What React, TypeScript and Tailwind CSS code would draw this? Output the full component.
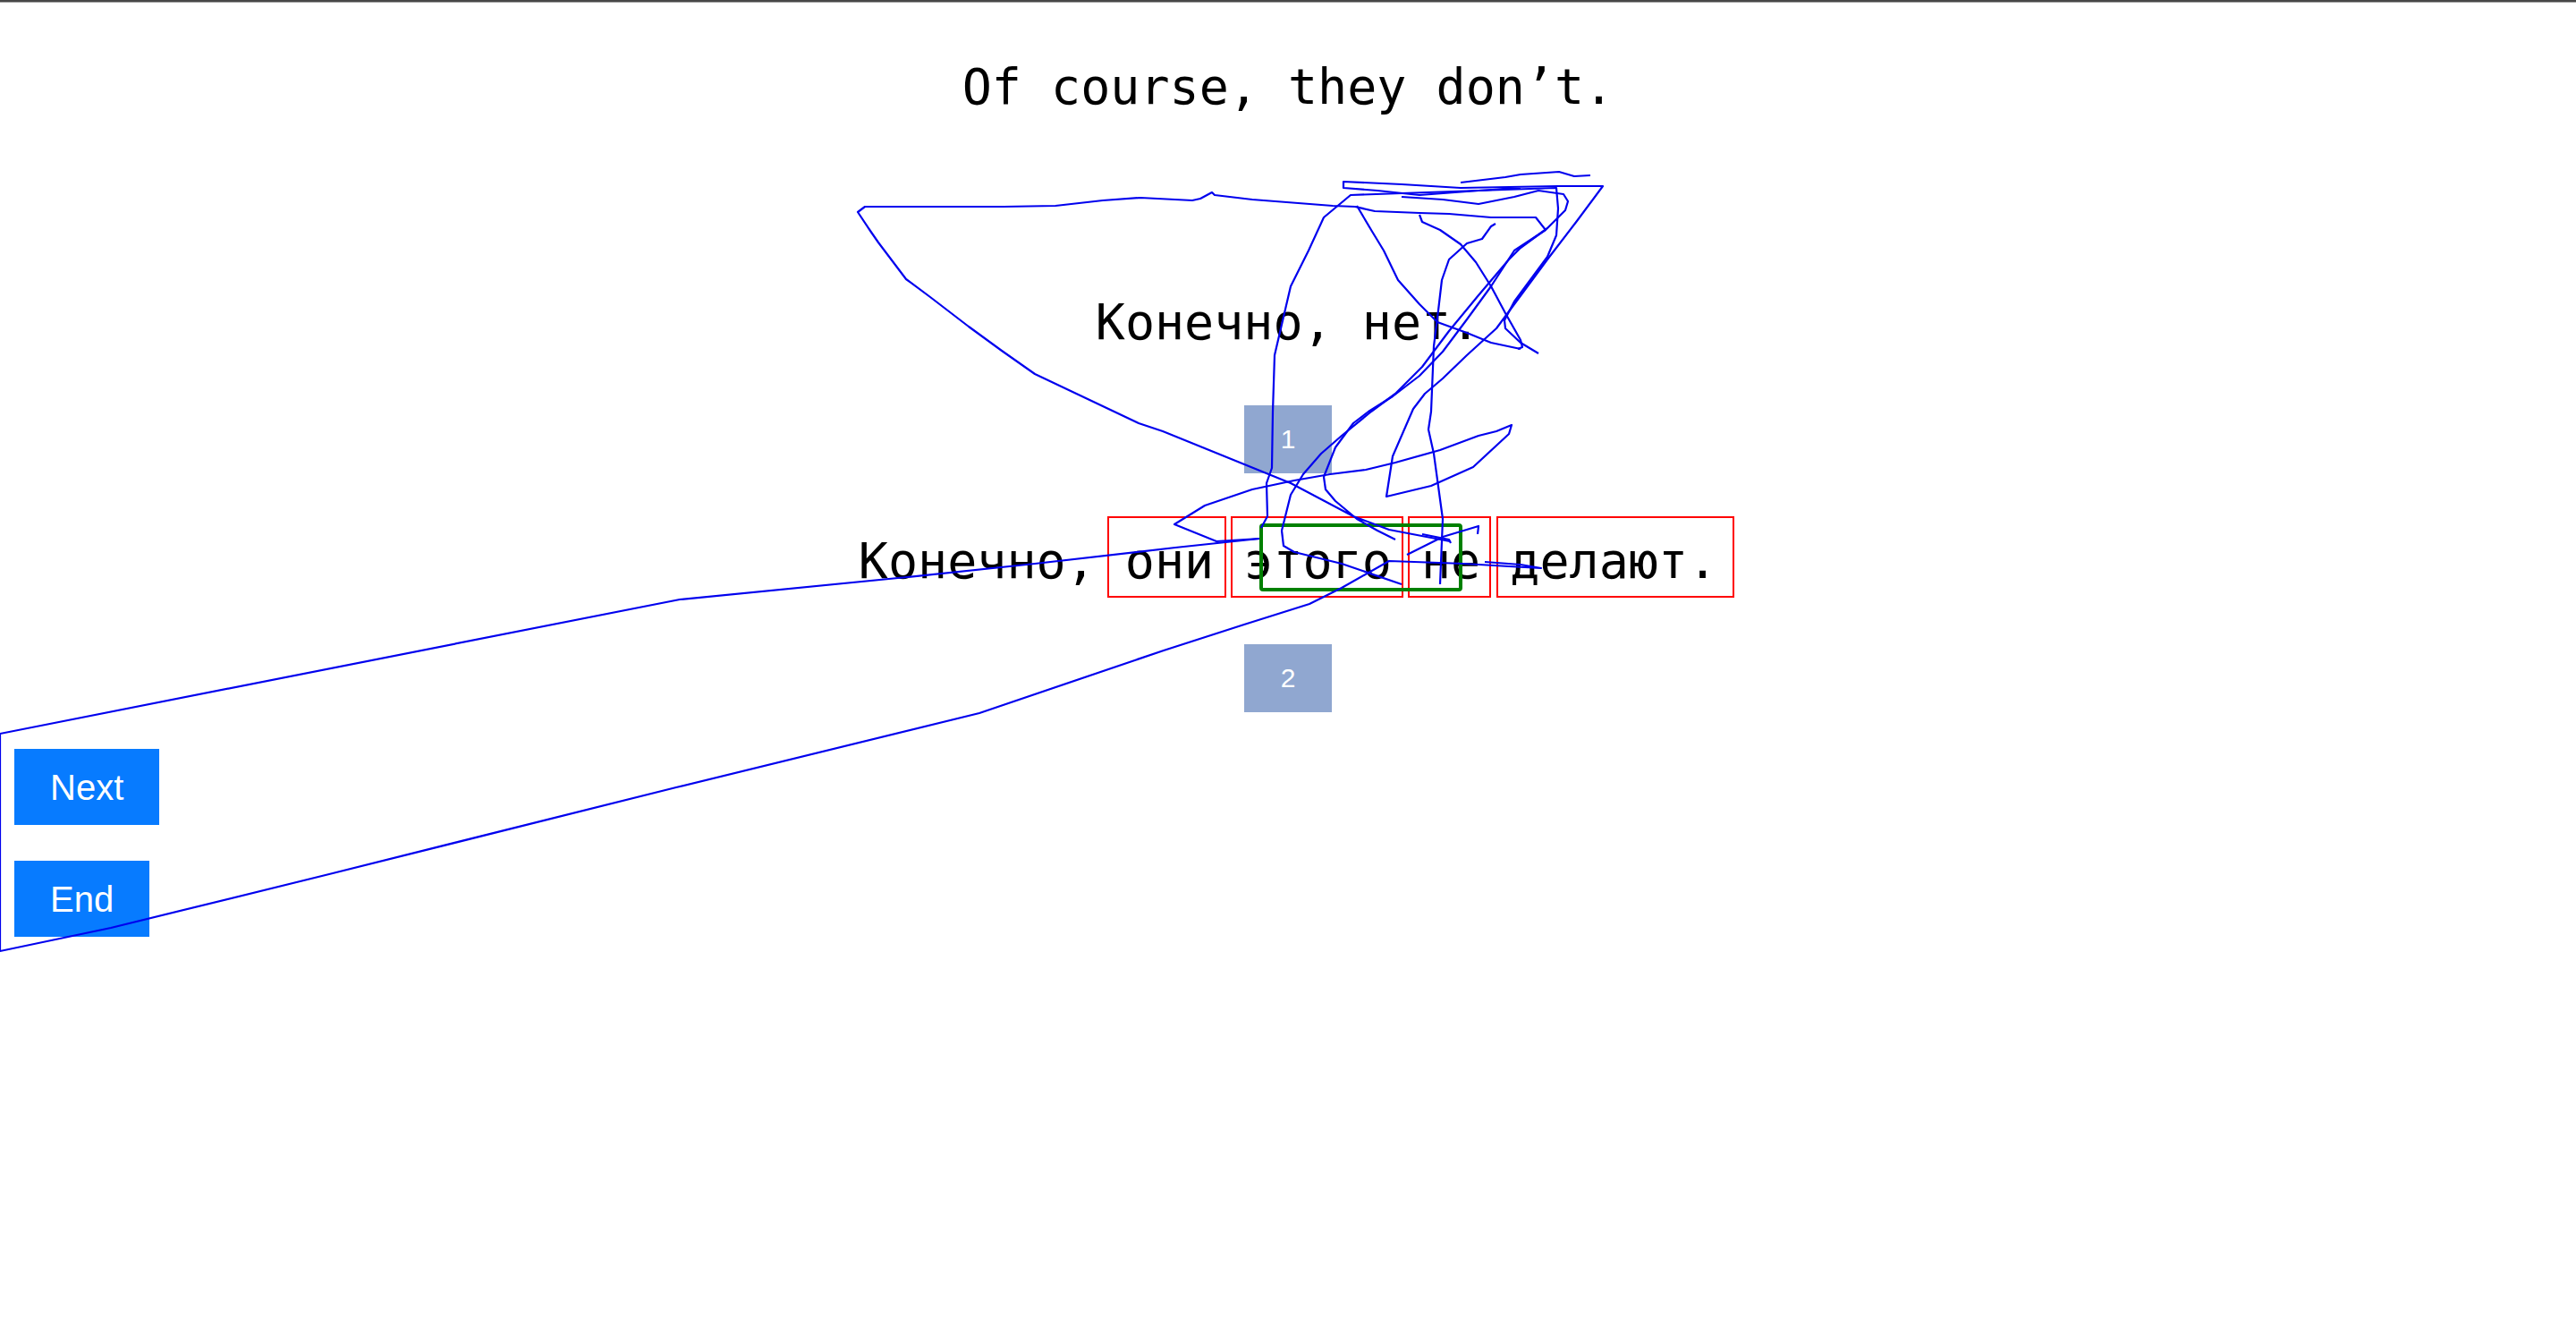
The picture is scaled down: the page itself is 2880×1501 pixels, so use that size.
type Point = [number, number]

// recorded pointer trace, page coordinates
const trace: Point[][] = [
  [
    [1621, 605], [1553, 592], [1513, 577], [1443, 540], [1300, 482], [1273, 473], [1157, 418],
    [1120, 392], [1083, 365], [1040, 332], [1013, 312], [982, 271], [973, 258], [959, 237],
    [967, 231], [1122, 231], [1180, 230], [1233, 224], [1275, 221], [1333, 224], [1342, 222],
    [1355, 215], [1358, 218], [1400, 223], [1490, 230], [1515, 231], [1537, 236], [1587, 238],
    [1620, 239], [1667, 243], [1717, 243], [1728, 257], [1693, 280], [1667, 320], [1640, 357],
    [1613, 393], [1587, 420], [1557, 443], [1530, 460], [1513, 473], [1493, 500], [1480, 533],
    [1482, 547], [1493, 560], [1517, 580], [1540, 593], [1560, 603],
  ],
  [
    [1410, 590], [1417, 577], [1416, 540], [1422, 523], [1423, 460], [1425, 397], [1432, 367],
    [1443, 320], [1463, 280], [1480, 243], [1510, 218], [1567, 216], [1653, 213], [1740, 210],
    [1742, 233], [1740, 263], [1730, 287], [1713, 310], [1693, 337], [1682, 358], [1683, 367],
    [1700, 383], [1720, 395],
  ],
  [
    [1700, 210], [1653, 213], [1587, 218], [1540, 213], [1502, 210], [1502, 203], [1567, 206],
    [1633, 210], [1742, 208], [1792, 208], [1763, 247], [1730, 290], [1693, 340], [1673, 367],
    [1640, 397], [1613, 423], [1593, 440], [1580, 457], [1557, 510], [1550, 555], [1600, 543],
    [1647, 522], [1687, 485], [1690, 475], [1673, 482], [1653, 487], [1610, 503], [1560, 517],
    [1527, 525], [1487, 530], [1447, 537], [1400, 547], [1347, 565], [1313, 586], [1360, 605],
    [1408, 602],
  ],
  [
    [1567, 220], [1613, 223], [1653, 228], [1693, 220], [1720, 213], [1748, 217], [1753, 225],
    [1750, 235], [1730, 255], [1700, 277], [1687, 290], [1653, 330], [1620, 370], [1590, 410],
    [1560, 440], [1533, 460], [1500, 487], [1477, 507], [1457, 530], [1443, 553], [1437, 577],
    [1433, 593], [1435, 610], [1447, 617], [1500, 630], [1567, 653],
  ],
  [
    [1517, 230], [1533, 257], [1547, 280], [1563, 313], [1587, 340], [1607, 360], [1640, 372],
    [1667, 383], [1700, 390],
  ],
  [
    [1587, 240], [1590, 248], [1610, 257], [1633, 273], [1650, 293], [1667, 320], [1683, 350],
    [1700, 380], [1702, 388], [1697, 390],
  ],
  [
    [1672, 250], [1667, 253], [1657, 267], [1640, 272], [1620, 290], [1612, 313], [1608, 347],
    [1603, 387], [1600, 460], [1597, 480], [1603, 507], [1613, 580], [1610, 653],
  ],
  [[1633, 204], [1683, 198], [1700, 195], [1743, 192], [1760, 197], [1778, 196]],
  [
    [1408, 602], [1314, 612], [1157, 630], [1014, 645], [760, 670], [0, 820], [0, 1063],
    [124, 1037], [368, 977], [756, 880], [1095, 797], [1301, 727], [1391, 698], [1464, 675],
    [1500, 657], [1553, 627], [1637, 630], [1687, 633], [1723, 635], [1700, 631], [1660, 628],
  ],
  [[1573, 620], [1613, 600], [1653, 588], [1652, 597]],
  [[1590, 597], [1620, 603], [1622, 607]],
]

// word areas of the target sentence
const wordBoxes = [
  { x: 1239, w: 131 },
  { x: 1377, w: 191 },
  { x: 1575, w: 91 },
  { x: 1674, w: 264 },
]

const GazeOverlay = () => (
  <svg
    className="pointer-events-none absolute left-0 top-0"
    width={2880}
    height={1501}
    viewBox="0 0 2880 1501"
  >
    {wordBoxes.map((box) => (
      <rect
        key={box.x}
        x={box.x}
        y={578}
        width={box.w}
        height={89}
        fill="none"
        stroke="#ff0000"
        strokeWidth={2}
      />
    ))}

    <rect
      x={1410}
      y={587}
      width={223}
      height={72}
      rx={2}
      fill="none"
      stroke="#008000"
      strokeWidth={4}
    />

    {trace.map((points, i) => (
      <polyline
        key={i}
        points={points.map(([x, y]) => `${x},${y}`).join(" ")}
        fill="none"
        stroke="#0000ee"
        strokeWidth={2.2}
        strokeLinejoin="round"
      />
    ))}
  </svg>
)

const Marker = ({ label }: { label: string }) => (
  <div className="flex h-[76px] w-[98px] items-center justify-center bg-[#90a7d0] font-['Liberation_Sans',Arial,sans-serif] text-[30px] text-white">
    {label}
  </div>
)

const ActionButton = ({ label }: { label: string }) => (
  <button
    type="button"
    className="flex h-[85px] items-center bg-[#077bff] px-10 font-['Liberation_Sans',Arial,sans-serif] text-[40px] leading-none text-white"
  >
    {label}
  </button>
)

export default function App() {
  return (
    <div className="relative min-h-screen bg-white text-black">
      <div className="h-[2px] bg-[#474747]" />
      <div className="h-px bg-[#a3a3a3]" />

      <main className="flex flex-col items-center font-['DejaVu_Sans_Mono',monospace] text-[55px] leading-[64px]">
        <p className="mt-[62px] whitespace-pre">Of course, they don’t.</p>
        <p className="mt-[199px] whitespace-pre">Конечно, нет.</p>
        <div className="mt-[61px]">
          <Marker label="1" />
        </div>
        <p className="mt-[66px] whitespace-pre">Конечно, они этого не делают.</p>
        <div className="mt-[61px]">
          <Marker label="2" />
        </div>
      </main>

      <div className="mt-[41px] flex flex-col items-start gap-10 pl-4">
        <ActionButton label="Next" />
        <ActionButton label="End" />
      </div>

      <GazeOverlay />
    </div>
  )
}
